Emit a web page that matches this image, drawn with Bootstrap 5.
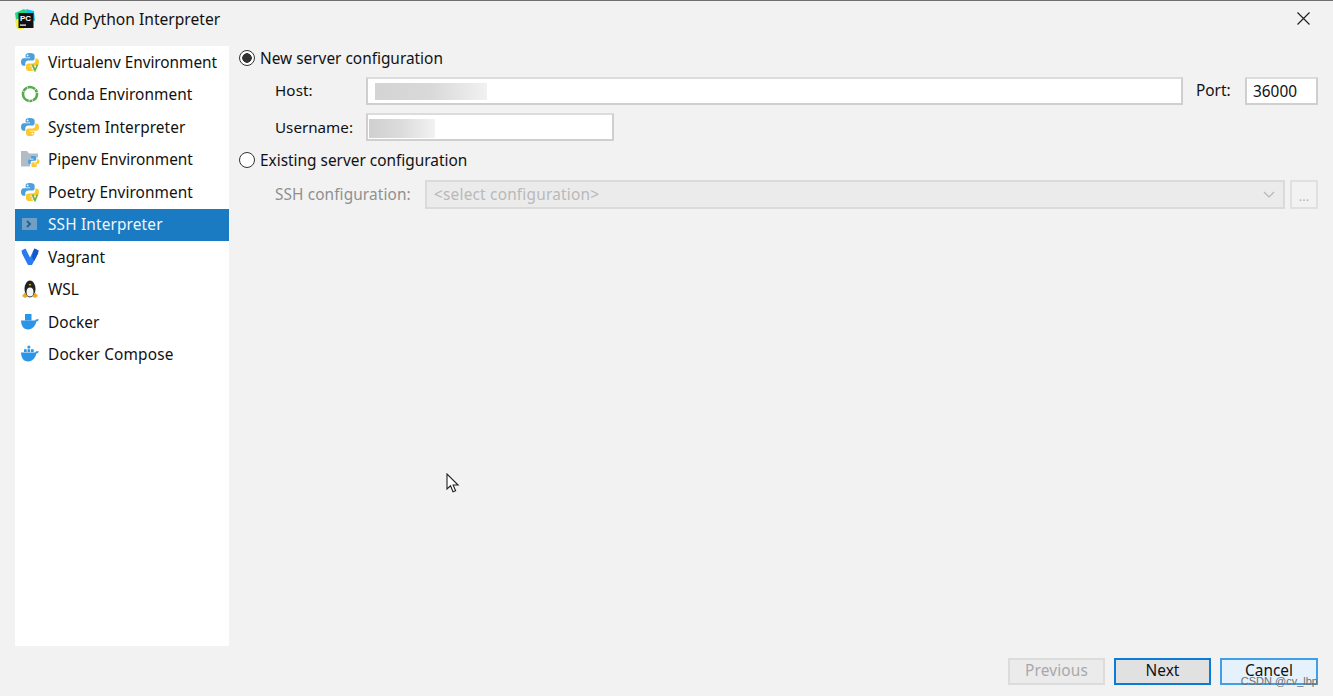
<!DOCTYPE html>
<html lang="en">
<head>
    <meta charset="UTF-8">
    <meta name="viewport" content="width=device-width, initial-scale=1.0">
    <title>Add Python Interpreter</title>
    <link href="https://cdn.jsdelivr.net/npm/bootstrap@5.3.0/dist/css/bootstrap.min.css" rel="stylesheet">
    <style>
        body { background: #f2f2f2; color: #111; font-family: "Noto Sans", "Liberation Sans", sans-serif; font-size: 15.4px; height: 696px; overflow: hidden; position: relative; }
        .dlg-top { border-top: 1px solid #6f6f6f; height: 46px; padding: 0 15px; }
        .dlg-title { font-size: 15.6px; margin-left: 14px; padding-bottom: 8px; }
        .app-logo { margin-bottom: 8px; }
        .dlg-close { margin: 0 8px 10px 0; }
        .dlg-main { height: 600px; padding-left: 15px; }
        .side-list { width: 214px; background: #fff; }
        .side-row { height: 32.5px; padding-left: 5px; gap: 8px; white-space: nowrap; letter-spacing: .05px; }
        .side-row:first-child, .side-row:nth-child(4) { letter-spacing: -.05px; }
        .side-row:nth-child(even) { padding-bottom: 1px; }
        .side-row:last-child, .side-row.is-active { letter-spacing: .15px; }
        .side-row.is-active { background: #1a7bc2; color: #f1f6fb; }
        .side-row svg { width: 20px; height: 20px; flex: none; }
        .cfg-pane { flex: 1; padding: 0 15px 0 10px; }
        .radio-row { height: 24px; gap: 5px; margin: 0; padding-top: 2px; }
        .radio-first { margin-bottom: 7px; }
        .radio-second { margin-top: 7px; margin-bottom: 8px; }
        .radio-dot { width: 16px; height: 16px; border: 1.5px solid #333; border-radius: 50%; background: #fff; flex: none; margin: 0 0 2px; appearance: none; }
        .radio-dot:checked { background: radial-gradient(circle, #333 0 4.5px, #fff 5px); }
        .field-row { padding-left: 36px; height: 28px; }
        .field-label { width: 91px; flex: none; font-size: 15.2px; }
        .label-up { padding-bottom: 2px; letter-spacing: .1px; }
        .field-box { height: 28px; border: 2px solid #cfcfcf; border-top-color: #dcdcdc; border-radius: 0; padding: 0 7px; font-size: 15.4px; background-color: #fff; background-repeat: no-repeat; color: #111; }
        .host-box { flex: 1; background-image: linear-gradient(90deg, #d4d4d4, #d9d9d9 50%, #f1f1f1); background-size: 112px 17px; background-position: 7px 4px; }
        .user-box { width: 248px; flex: none; background-image: linear-gradient(90deg, #d0d0d0, #dcdcdc 50%, #f2f2f2); background-size: 66px 19px; background-position: 1px 4px; }
        .port-label { width: 35px; flex: none; margin: 0 14px 0 13px; }
        .port-box { width: 73px; flex: none; padding: 0 6px; }
        .ssh-row { padding-left: 36px; height: 29px; color: #8f8f8f; }
        .ssh-label { width: 150px; flex: none; letter-spacing: .1px; }
        .ssh-select { flex: 1; height: 29px; border: 2px solid #dadada; background: #ebebeb; color: #b9b9b9; padding: 0 8px 0 7px; letter-spacing: .2px; }
        .ssh-more { width: 28px; height: 29px; flex: none; margin-left: 5px; border: 2px solid #e0e0e0; border-radius: 0; background: #f0f0f0; color: #b5b5b5; padding: 4px 0 0; font-size: 13px; line-height: 1; }
        .ssh-more:disabled { border-color: #e0e0e0; color: #b5b5b5; opacity: 1; }
        .dlg-foot { height: 27px; margin-top: 12px; padding-right: 15px; gap: 9px; }
        .foot-btn { width: 97px; height: 27px; border-radius: 0; padding: 0 0 2px; font-size: 15.4px; line-height: 1; color: #111; }
        .foot-prev, .foot-prev:disabled { background: #ebebeb; border: 2px solid #dcdcdc; color: #a8a8a8; opacity: 1; letter-spacing: .15px; }
        .foot-next { background: #e1e1e1; border: 2px solid #0b7bd6; }
        .foot-cancel { width: 98px; background: #e5f1fb; border: 2px solid #3f9fe8; }
        .csdn-mark { position: absolute; right: 15px; top: 674px; font-size: 11px; line-height: 14px; color: #707070; font-family: "Liberation Sans", sans-serif; }
        .arrow-pointer { position: absolute; left: 446px; top: 473px; }
    </style>
</head>
<body>
    <svg width="0" height="0" class="position-absolute">
        <defs>
            <symbol id="py" viewBox="0 0 20 20">
                <path fill="#4a9fdc" d="M9.800 1C6.500 1 5.600 2.100 5.600 3.600V5.500h4.600v.8H3.600C2 6.300 1 7.700 1 10s1 3.800 2.600 3.800h1.700v-2.300c0-1.600 1.300-2.900 3-2.900h4.100c1.200 0 2.200-1 2.200-2.200V3.600C14.600 2 13.200 1 9.800 1zM7.600 2.500a.9.9 0 1 1 0 1.800.9.9 0 0 1 0-1.800z"/>
                <path fill="#fcc82e" d="M15.300 6.400v2.200c0 1.700-1.300 3-3 3H8.200c-1.200 0-2.200 1-2.200 2.200v2.600C6 18 7.400 19 10.200 19c3.300 0 4.200-1.100 4.200-2.600v-1.900H9.800v-.8h6.600c1.600 0 2.600-1.400 2.600-3.700s-1-3.600-2.600-3.600zM12.400 15.700a.9.9 0 1 1 0 1.800.9.9 0 0 1 0-1.800z"/>
            </symbol>
            <symbol id="whale" viewBox="0 0 20 20">
                <path fill="#2b95e8" d="M1 8.500h14.200c.4-1 1.600-1.500 3.800-.9-.6 1.300-1.500 1.800-2.700 1.900-.7 4-3.600 8-8.300 8C3.400 17.500 1.200 13.500 1 8.500z"/>
            </symbol>
        </defs>
    </svg>

    <div class="dlg-top d-flex align-items-center">
        <svg class="app-logo" width="21" height="21" viewBox="0 0 21 21">
            <path fill="#21d789" d="M0 4l9-4 5 3-7 16-5-1z"/>
            <path fill="#f4f03c" d="M0 11l5-2 4 11H2z"/>
            <path fill="#07c3f2" d="M11 0l8 2 1 10-6-2z"/>
            <rect x="3.500" y="4" width="15" height="15" fill="#111"/>
            <text x="5" y="12" fill="#fff" font-family="Liberation Sans, sans-serif" font-weight="700" font-size="8">PC</text>
            <rect x="5" y="15.500" width="6" height="1.200" fill="#fff"/>
        </svg>
        <div class="dlg-title flex-grow-1">Add Python Interpreter</div>
        <svg class="dlg-close" width="13" height="13" viewBox="0 0 13 13"><path d="M.5.500l12 12m0-12l-12 12" stroke="#222" stroke-width="1.200" fill="none"/></svg>
    </div>

    <div class="dlg-main d-flex">
        <div class="side-list d-flex flex-column">
            <div class="side-row d-flex align-items-center">
                <svg viewBox="0 0 20 20"><use href="#py"/><path d="M12.500 12.500l2.500 6 2.500-6" fill="none" stroke="#62b543" stroke-width="1.600"/></svg>Virtualenv Environment
            </div>
            <div class="side-row d-flex align-items-center">
                <svg viewBox="0 0 20 20"><circle cx="10" cy="10" r="7" fill="none" stroke="#57ab4e" stroke-width="2.600" stroke-dasharray="8 .6 3 .6 12 .6 5 .6"/></svg>Conda Environment
            </div>
            <div class="side-row d-flex align-items-center">
                <svg viewBox="0 0 20 20"><use href="#py"/></svg>System Interpreter
            </div>
            <div class="side-row d-flex align-items-center">
                <svg viewBox="0 0 20 20"><path fill="#b2bcc6" d="M1 2h6l2 2.500h9v4H10v9H1z"/><path fill="#4a9fdc" d="M13 7c-2 0-2.500.7-2.500 1.600v1.200h3v.6H9.700c-1 0-1.700.9-1.700 2.300s.7 2.300 1.700 2.300h1v-1.400c0-1 .8-1.800 1.800-1.800h2.400c.8 0 1.400-.6 1.400-1.400V8.600C16.300 7.600 15.300 7 13 7z"/><path fill="#fcc82e" d="M17 10.300v1.400c0 1-.8 1.800-1.800 1.800h-2.500c-.8 0-1.300.6-1.300 1.400v1.500c0 1 1 1.600 2.800 1.600 2 0 2.600-.7 2.600-1.600v-1.200h-3v-.5h4c1 0 1.700-.9 1.700-2.300s-.7-2.100-1.700-2.100z"/></svg>Pipenv Environment
            </div>
            <div class="side-row d-flex align-items-center">
                <svg viewBox="0 0 20 20"><use href="#py"/><path d="M12.500 12.500l2.500 6 2.500-6" fill="none" stroke="#62b543" stroke-width="1.600"/></svg>Poetry Environment
            </div>
            <div class="side-row is-active d-flex align-items-center">
                <svg viewBox="0 0 20 20"><rect x="2" y="4" width="15" height="12" fill="#6f9fc4"/><path d="M7 7l3 3-3 3" fill="none" stroke="#1f5f92" stroke-width="1.800"/></svg>SSH Interpreter
            </div>
            <div class="side-row d-flex align-items-center">
                <svg viewBox="0 0 20 20"><path fill="#2a7bf0" d="M1.500 3.500L5.500 1.500l4.500 9 4.500-9 4 2-.5 3L12 18H8L2 6.500z"/><path fill="#1159cc" d="M13 4.500l1.500-3 4 2-.5 3-3.800 7.500-2.200-4z"/></svg>Vagrant
            </div>
            <div class="side-row d-flex align-items-center">
                <svg viewBox="0 0 20 20"><ellipse cx="10" cy="10" rx="5.500" ry="8.500" fill="#222"/><ellipse cx="10" cy="13" rx="3.500" ry="4.500" fill="#f4f4f4"/><path fill="#f0b429" d="M8.700 5h2.600L10 7z"/><path fill="#e9a820" d="M2 17l3-3.500 2.500 4-2.500 1.500zm16 0l-3-3.500-2.500 4 2.500 1.500z"/></svg>WSL
            </div>
            <div class="side-row d-flex align-items-center">
                <svg viewBox="0 0 20 20"><use href="#whale"/><rect x="5" y="2" width="6.500" height="6.500" fill="#2b95e8"/></svg>Docker
            </div>
            <div class="side-row d-flex align-items-center">
                <svg viewBox="0 0 20 20"><use href="#whale"/><path fill="#2b95e8" d="M4 5.300h2.700V8H4zm3.500 0h2.700V8H7.500zm3.500 0h2.700V8H11zM7.500 1.700h2.700v2.700H7.500z"/></svg>Docker Compose
            </div>
        </div>

        <div class="cfg-pane d-flex flex-column">
            <label class="radio-row radio-first d-flex align-items-center"><input class="radio-dot" type="radio" name="srv" checked>New server configuration</label>
            <div class="field-row d-flex align-items-center">
                <span class="field-label label-up">Host:</span>
                <input class="form-control field-box host-box" type="text">
                <span class="port-label">Port:</span>
                <input class="form-control field-box port-box" type="text" value="36000">
            </div>
            <div class="field-row d-flex align-items-center mt-2">
                <span class="field-label">Username:</span>
                <input class="form-control field-box user-box" type="text">
            </div>
            <label class="radio-row radio-second d-flex align-items-center"><input class="radio-dot" type="radio" name="srv">Existing server configuration</label>
            <div class="ssh-row d-flex align-items-center">
                <span class="ssh-label">SSH configuration:</span>
                <div class="ssh-select d-flex align-items-center flex-grow-1">
                    <span class="flex-grow-1">&lt;select configuration&gt;</span>
                    <svg width="12" height="7" viewBox="0 0 12 7"><path d="M1 1l5 5 5-5" fill="none" stroke="#b5b5b5" stroke-width="1.200"/></svg>
                </div>
                <button class="ssh-more btn" disabled>...</button>
            </div>
        </div>
    </div>

    <div class="dlg-foot d-flex justify-content-end">
        <button class="btn foot-btn foot-prev" disabled>Previous</button>
        <button class="btn foot-btn foot-next">Next</button>
        <button class="btn foot-btn foot-cancel">Cancel</button>
    </div>

    <div class="csdn-mark">CSDN @cv_lbp</div>
    <svg class="arrow-pointer" width="14" height="21" viewBox="0 0 14 21"><path d="M1 1v15l3.500-3.200 2.500 6 2.600-1-2.500-5.800h5z" fill="#fff" stroke="#222" stroke-width="1.100"/></svg>

    <script src="https://cdn.jsdelivr.net/npm/bootstrap@5.3.0/dist/js/bootstrap.bundle.min.js"></script>
</body>
</html>
